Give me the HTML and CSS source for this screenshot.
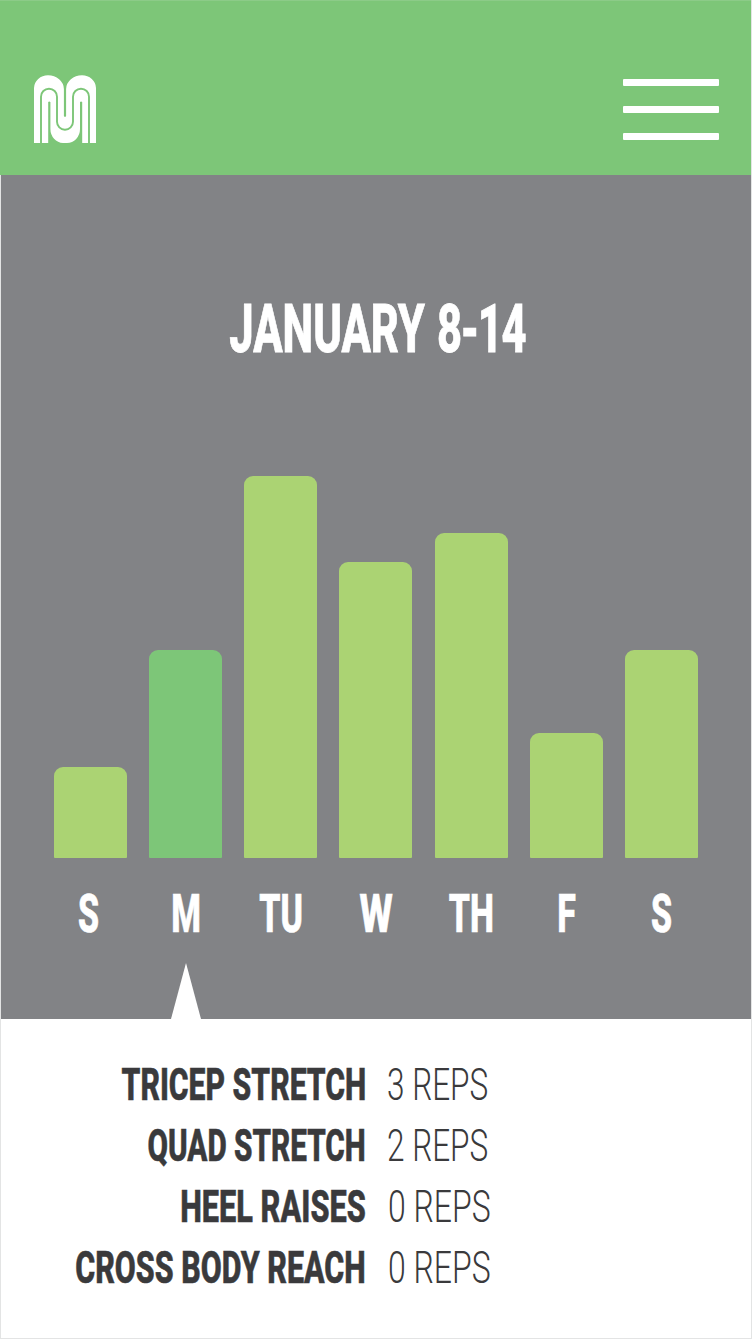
FILE: index.html
```html
<!DOCTYPE html>
<html lang="en">
<head>
    <meta charset="UTF-8">
    <meta name="viewport" content="width=device-width, initial-scale=1.0">
    <title>Weekly Stretches</title>
    <link rel="stylesheet" href="styles.css">
</head>
<body>
    <div class="screen">
        <header class="topbar">
            <svg class="logo" viewBox="0 0 62 68">
                <path class="logo-shape" d="M0 68V13A14 13 0 0 1 14 0.3A16 14 0 0 1 29.9 14V41.3Q31 42.3 32.1 41.3V14A16 14 0 0 1 48 0.3A14 13 0 0 1 62 13V68H48.2V27Q47.1 26 46 27V54A13 14 0 0 1 33 68H29A13 14 0 0 1 16.4 54V27Q15.3 26 14.2 27V68Z"/>
                <path class="logo-line" d="M7 68V21.7a8 8 0 0 1 16 0V46.7a8 8 0 0 0 16 0V21.7a8 8 0 0 1 16 0V68"/>
            </svg>
            <div class="menu">
                <span></span>
                <span></span>
                <span></span>
            </div>
        </header>

        <main class="week">
            <h1><span>JANUARY <span class="dates">8-14</span></span></h1>
            <div class="chart">
                <div class="bar" style="height: 91.5px"></div>
                <div class="bar active" style="height: 208.5px"></div>
                <div class="bar" style="height: 382px"></div>
                <div class="bar" style="height: 296px"></div>
                <div class="bar" style="height: 325.5px"></div>
                <div class="bar" style="height: 125px"></div>
                <div class="bar" style="height: 208.5px"></div>
            </div>
            <div class="days">
                <div class="sun"><span>S</span></div>
                <div class="mon"><span>M</span></div>
                <div class="tue"><span>TU</span></div>
                <div class="wed"><span>W</span></div>
                <div class="thu"><span>TH</span></div>
                <div class="fri"><span>F</span></div>
                <div class="sat"><span>S</span></div>
            </div>
            <svg class="pointer" viewBox="0 0 30 56"><path d="M15 0L30 56H0Z"/></svg>
        </main>

        <section class="exercises">
            <div class="row tricep">
                <div class="name"><span>TRICEP STRETCH</span></div>
                <div class="reps"><span>3 REPS</span></div>
            </div>
            <div class="row quad">
                <div class="name"><span>QUAD STRETCH</span></div>
                <div class="reps"><span>2 REPS</span></div>
            </div>
            <div class="row heel">
                <div class="name"><span>HEEL RAISES</span></div>
                <div class="reps"><span>0 REPS</span></div>
            </div>
            <div class="row cross">
                <div class="name"><span>CROSS BODY REACH</span></div>
                <div class="reps"><span>0 REPS</span></div>
            </div>
        </section>
    </div>
</body>
</html>
```
FILE: styles.css
```css
* {
    box-sizing: border-box;
}
body {
    margin: 0;
    font-family: Roboto, "Liberation Sans", sans-serif;
    background: #fff;
}
.screen {
    height: 1339px;
    border: 1px solid #e3e4e4;
    border-top: none;
}
.topbar {
    height: 175px;
    margin-left: -1px;
    padding: 74px 32.5px 0 34px;
    display: flex;
    justify-content: space-between;
    background: #7dc678;
    border-top: 1px solid #8ccb88;
}
.logo {
    width: 62px;
    height: 68px;
}
.logo-shape {
    fill: #fff;
}
.logo-line {
    fill: none;
    stroke: #7dc678;
    stroke-width: 1.9;
}
.menu {
    width: 95.5px;
    height: 61px;
    margin-top: 3.5px;
    display: flex;
    flex-direction: column;
    justify-content: space-between;
}
.menu span {
    height: 7px;
    background: #fff;
    border-radius: 1px;
}
.week {
    height: 844px;
    padding: 124px 53px 0;
    background: #828386;
    color: #fff;
}
h1 {
    height: 60px;
    margin: 0;
    font-size: 67px;
    font-weight: 800;
    line-height: 60px;
    text-align: center;
    white-space: nowrap;
    -webkit-text-stroke: 0.8px #fff;
}
h1 > span, .days span, .row span {
    display: inline-block;
}
h1 > span {
    margin-left: 2px;
    transform: scaleX(0.648);
}
h1 .dates {
    margin-left: 2px;
    letter-spacing: -2px;
}
.chart {
    height: 382px;
    margin-top: 117px;
    display: flex;
    align-items: flex-end;
    justify-content: space-between;
}
.bar {
    width: 73px;
    background: #abd373;
    border-radius: 9px 9px 1px 1px;
}
.bar.active {
    background: #7dc678;
}
.days {
    height: 60px;
    margin-top: 26px;
    display: flex;
    justify-content: space-between;
    font-size: 53px;
    font-weight: 800;
    line-height: 60px;
    -webkit-text-stroke: 0.7px #fff;
}
.days div {
    width: 73px;
    display: flex;
    justify-content: center;
}
.days span {
    transform: scaleX(0.64);
}
.days .sun {
    padding-right: 4px;
}
.days .mon {
    padding-left: 2px;
}
.days .wed span {
    transform: scaleX(0.72);
}
.pointer {
    display: block;
    width: 30px;
    height: 56px;
    margin: 19px 0 0 117px;
    fill: #fff;
}
.exercises {
    padding-top: 35px;
    color: #3a3a3c;
}
.row {
    height: 61px;
    display: flex;
    font-size: 45px;
    line-height: 61px;
    white-space: nowrap;
}
.name {
    width: 365px;
    display: flex;
    justify-content: flex-end;
    font-weight: 800;
    -webkit-text-stroke: 0.6px #3a3a3c;
}
.name span {
    transform: scaleX(0.67);
    transform-origin: right;
}
.reps {
    margin-left: 21px;
    font-weight: 300;
}
.reps span {
    transform: scaleX(0.7);
    transform-origin: left;
}
.quad .name span {
    transform: scaleX(0.66);
}
.heel .name span {
    transform: scaleX(0.683);
}
.cross .name span {
    transform: scaleX(0.676);
}
.heel .reps span, .cross .reps span {
    margin-left: 1px;
    transform: scaleX(0.71);
}
```
